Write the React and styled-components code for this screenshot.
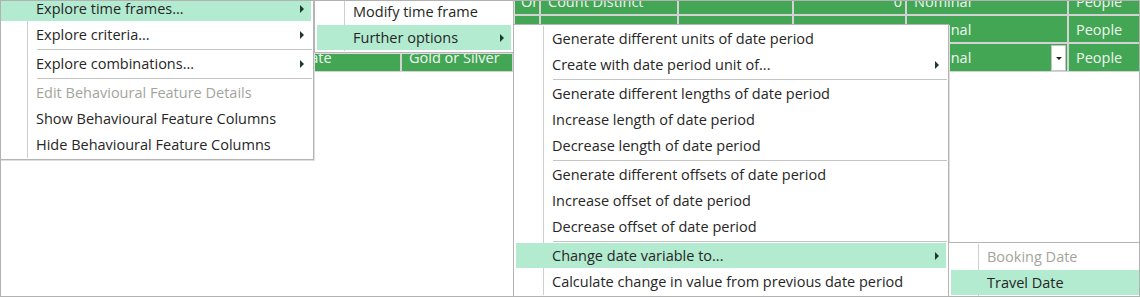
import styled, { createGlobalStyle } from "styled-components"

const GlobalStyle = createGlobalStyle`
  body {
    margin: 0;
    background: #fff;
    overflow: hidden;
  }
`

const rows = [
  { cells: ["", "", "", "Or", "Count Distinct", "", "0", "Nominal", "People"] },
  { cells: ["", "", "", "", "Event Distinct", "", "5", "Nominal", "People"] },
  { cells: ["", "Travel Date", "Gold or Silver", "", "", "", "", "Nominal", "People"], dropdown: true },
]

const menus = [
  {
    left: -4, top: -7, width: 317,
    items: [
      { label: "Explore time frames...", sub: true, active: true },
      { label: "Explore criteria...", sub: true },
      { sep: true },
      { label: "Explore combinations...", sub: true },
      { sep: true },
      { label: "Edit Behavioural Feature Details", disabled: true },
      { label: "Show Behavioural Feature Columns" },
      { label: "Hide Behavioural Feature Columns" },
    ],
  },
  {
    left: 313, top: -4, width: 200,
    items: [
      { label: "Modify time frame" },
      { label: "Further options", sub: true, active: true },
    ],
  },
  {
    left: 512, top: 23, width: 436,
    items: [
      { label: "Generate different units of date period" },
      { label: "Create with date period unit of...", sub: true },
      { sep: true },
      { label: "Generate different lengths of date period" },
      { label: "Increase length of date period" },
      { label: "Decrease length of date period" },
      { sep: true },
      { label: "Generate different offsets of date period" },
      { label: "Increase offset of date period" },
      { label: "Decrease offset of date period" },
      { sep: true },
      { label: "Change date variable to...", sub: true, active: true },
      { label: "Calculate change in value from previous date period" },
    ],
  },
  {
    left: 947, top: 241, width: 210,
    items: [
      { label: "Booking Date", disabled: true },
      { label: "Travel Date", active: true },
    ],
  },
]

const App = () => {
  return (
    <>
      <GlobalStyle />
      <Frame>
        <Grid>
          {rows.map((row, r) =>
            row.cells.map((text, c) => (
              <Cell key={`${r}-${c}`} $right={c === 6}>
                <CellText>{text}</CellText>
                {row.dropdown && c === 7 ? <DropButton /> : null}
              </Cell>
            ))
          )}
        </Grid>

        {menus.map((menu, m) => (
          <Menu key={m} $left={menu.left} $top={menu.top} $width={menu.width}>
            {menu.items.map((item, i) =>
              item.sep ? (
                <Separator key={i} />
              ) : (
                <Item key={i} $active={item.active} $disabled={item.disabled}>
                  {item.label}
                  {item.sub ? <Arrow /> : null}
                </Item>
              )
            )}
          </Menu>
        ))}
      </Frame>
    </>
  )
}

const Frame = styled.div`
    width: 1140px;
    height: 297px;
    box-sizing: border-box;
    border: 1px solid #b2b2b2;
    position: relative;
    overflow: hidden;
    background: #fff;
    font-family: "Open Sans", "Noto Sans", sans-serif;
    font-size: 14.5px;
    color: #262626;
`

// data grid sitting behind the context menus
const Grid = styled.div`
    margin-top: -13px;
    display: grid;
    grid-template-columns: 245px 152px 110px 25px 136px 113px 111px 160px 1fr;
    grid-template-rows: 26px 26px 27px;
    gap: 2px;
    background: #d3d3d3;
    border-bottom: 1px solid #d3d3d3;
`
const Cell = styled.div`
    background: #43a655;
    color: #eef7ef;
    display: flex;
    align-items: center;
    justify-content: ${p => p.$right ? "flex-end" : "space-between"};
    padding: 0 ${p => p.$right ? "3px" : "0"} 0 7px;
    white-space: nowrap;
    overflow: hidden;
`
const CellText = styled.span`
`
const DropButton = styled.div`
    width: 13px;
    align-self: stretch;
    margin: 1px 1px 0 0;
    background: #fff;
    border: 1px solid #c4c4c4;
    display: flex;
    align-items: center;
    justify-content: center;
    &::after {
        content: "";
        border-top: 3px solid #222;
        border-left: 3px solid transparent;
        border-right: 3px solid transparent;
    }
`

//Menu CSS
const Menu = styled.div`
    position: absolute;
    left: ${p => p.$left}px;
    top: ${p => p.$top}px;
    width: ${p => p.$width}px;
    box-sizing: border-box;
    background: #fff;
    border: 1px solid #b4b4b4;
    box-shadow: 1px 1px 0 #dedede;
    padding: 1px;
    &::before {
        content: "";
        position: absolute;
        left: 29px;
        top: 1px;
        bottom: 1px;
        width: 1px;
        background: #cfcfcf;
    }
`
const Item = styled.div`
    position: relative;
    height: 26px;
    box-sizing: border-box;
    margin: 0 1px;
    padding-left: 36px;
    display: flex;
    align-items: center;
    white-space: nowrap;
    border-bottom: 1px solid transparent;
    background-clip: padding-box;
    background-color: ${p => p.$active ? "#b3ebd1" : "transparent"};
    color: ${p => p.$disabled ? "#a4a49c" : "#262626"};
`
const Arrow = styled.span`
    margin-left: auto;
    margin-right: 7px;
    border-left: 4px solid #1f3a2c;
    border-top: 4px solid transparent;
    border-bottom: 4px solid transparent;
`
const Separator = styled.div`
    position: relative;
    height: 3px;
    margin-left: 38px;
    display: flex;
    align-items: center;
    &::after {
        content: "";
        flex: 1;
        height: 1px;
        background: #c4c4c4;
    }
`

export default App
